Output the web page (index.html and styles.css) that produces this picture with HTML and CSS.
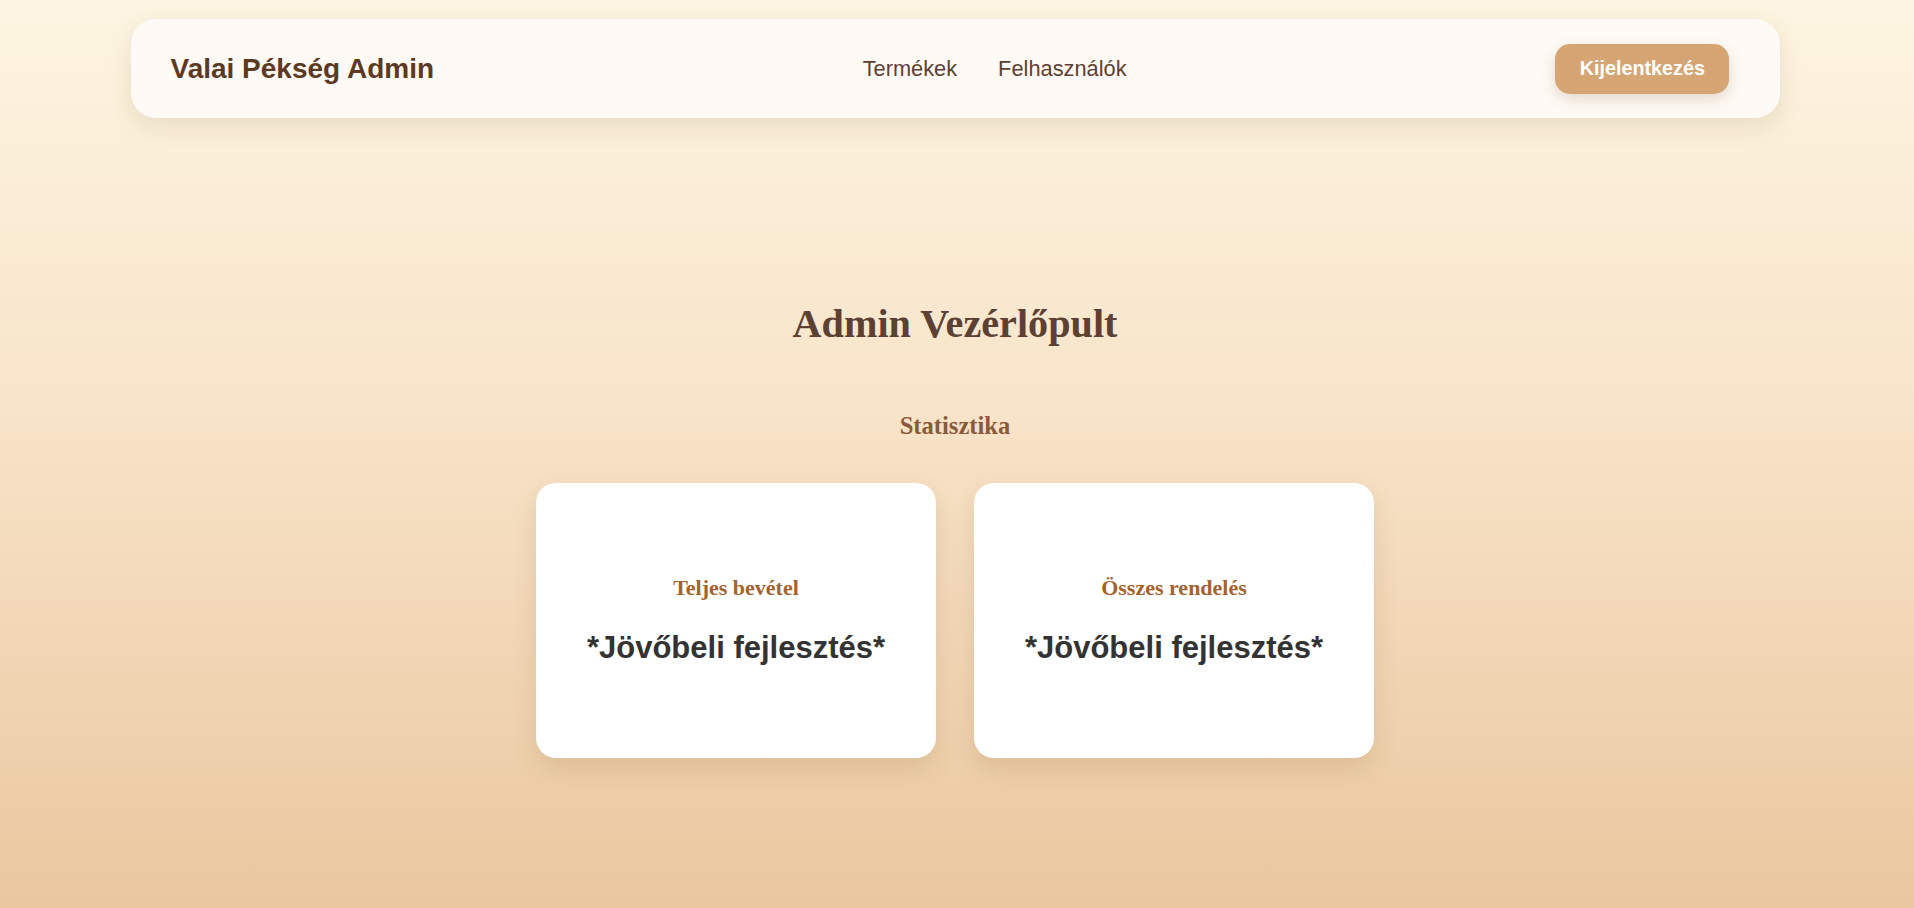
FILE: index.html
```html
<!DOCTYPE html>
<html lang="hu">
<head>
<meta charset="utf-8">
<title>Valai Pékség Admin</title>
<link rel="stylesheet" href="styles.css">
</head>
<body>
<nav class="navbar">
  <div class="logo">Valai Pékség Admin</div>
  <div class="nav-links">
    <a href="#" class="nav-link">Termékek</a>
    <a href="#" class="nav-link">Felhasználók</a>
  </div>
  <button class="logout-btn" type="button">Kijelentkezés</button>
</nav>
<main class="dashboard">
  <h1 class="page-title">Admin Vezérlőpult</h1>
  <h2 class="section-title">Statisztika</h2>
  <div class="stats">
    <div class="stat-card">
      <h3 class="stat-label">Teljes bevétel</h3>
      <p class="stat-value">*Jövőbeli fejlesztés*</p>
    </div>
    <div class="stat-card">
      <h3 class="stat-label">Összes rendelés</h3>
      <p class="stat-value">*Jövőbeli fejlesztés*</p>
    </div>
  </div>
</main>
</body>
</html>
```

FILE: styles.css
```css
html, body {
  margin: 0;
  padding: 0;
}

body {
  min-height: 100vh;
  box-sizing: border-box;
  padding-right: 4px;
  background: linear-gradient(to bottom, #fdf5e2 0%, #f8e4c9 45%, #eac79f 100%);
  font-family: "Liberation Serif", "Times New Roman", serif;
  overflow: hidden;
}

.navbar {
  max-width: 1649px;
  margin: 19px auto 0;
  box-sizing: border-box;
  padding: 24.5px 50px 24.5px 40px;
  display: flex;
  align-items: center;
  justify-content: space-between;
  background: #fffaf5;
  border-radius: 25px;
  box-shadow: 0 8px 24px rgba(120, 90, 50, 0.14);
}

.logo {
  font-family: "Liberation Sans", Arial, sans-serif;
  font-weight: 700;
  font-size: 28px;
  color: #5c3a22;
}

.nav-links {
  display: flex;
  gap: 41px;
}

.nav-link {
  font-family: "Liberation Sans", Arial, sans-serif;
  font-size: 21.8px;
  color: #5e4032;
  text-decoration: none;
}

.logout-btn {
  font-family: "Liberation Sans", Arial, sans-serif;
  font-weight: 700;
  font-size: 19.8px;
  line-height: 23px;
  color: #ffffff;
  background: #d6a574;
  border: none;
  border-radius: 15px;
  padding: 13.5px 24.5px;
  box-shadow: 0 5px 14px rgba(120, 80, 40, 0.2);
  cursor: pointer;
}

.dashboard {
  display: flex;
  flex-direction: column;
  align-items: center;
  padding-top: 182px;
}

.page-title {
  margin: 0;
  font-size: 40.2px;
  font-weight: 700;
  color: #5c4033;
}

.section-title {
  margin: 65px 0 0;
  font-size: 24.6px;
  font-weight: 700;
  color: #8b5a3c;
}

.stats {
  display: flex;
  gap: 38px;
  margin-top: 43px;
}

.stat-card {
  width: 400px;
  height: 275px;
  box-sizing: border-box;
  background: #ffffff;
  border-radius: 20px;
  box-shadow: 0 10px 24px rgba(120, 80, 40, 0.15);
  display: flex;
  flex-direction: column;
  align-items: center;
  justify-content: center;
}

.stat-label {
  margin: 0 0 29px;
  font-size: 22px;
  font-weight: 700;
  color: #a3632e;
}

.stat-value {
  margin: 0;
  font-family: "Liberation Sans", Arial, sans-serif;
  font-weight: 700;
  font-size: 31px;
  color: #333333;
}
```
